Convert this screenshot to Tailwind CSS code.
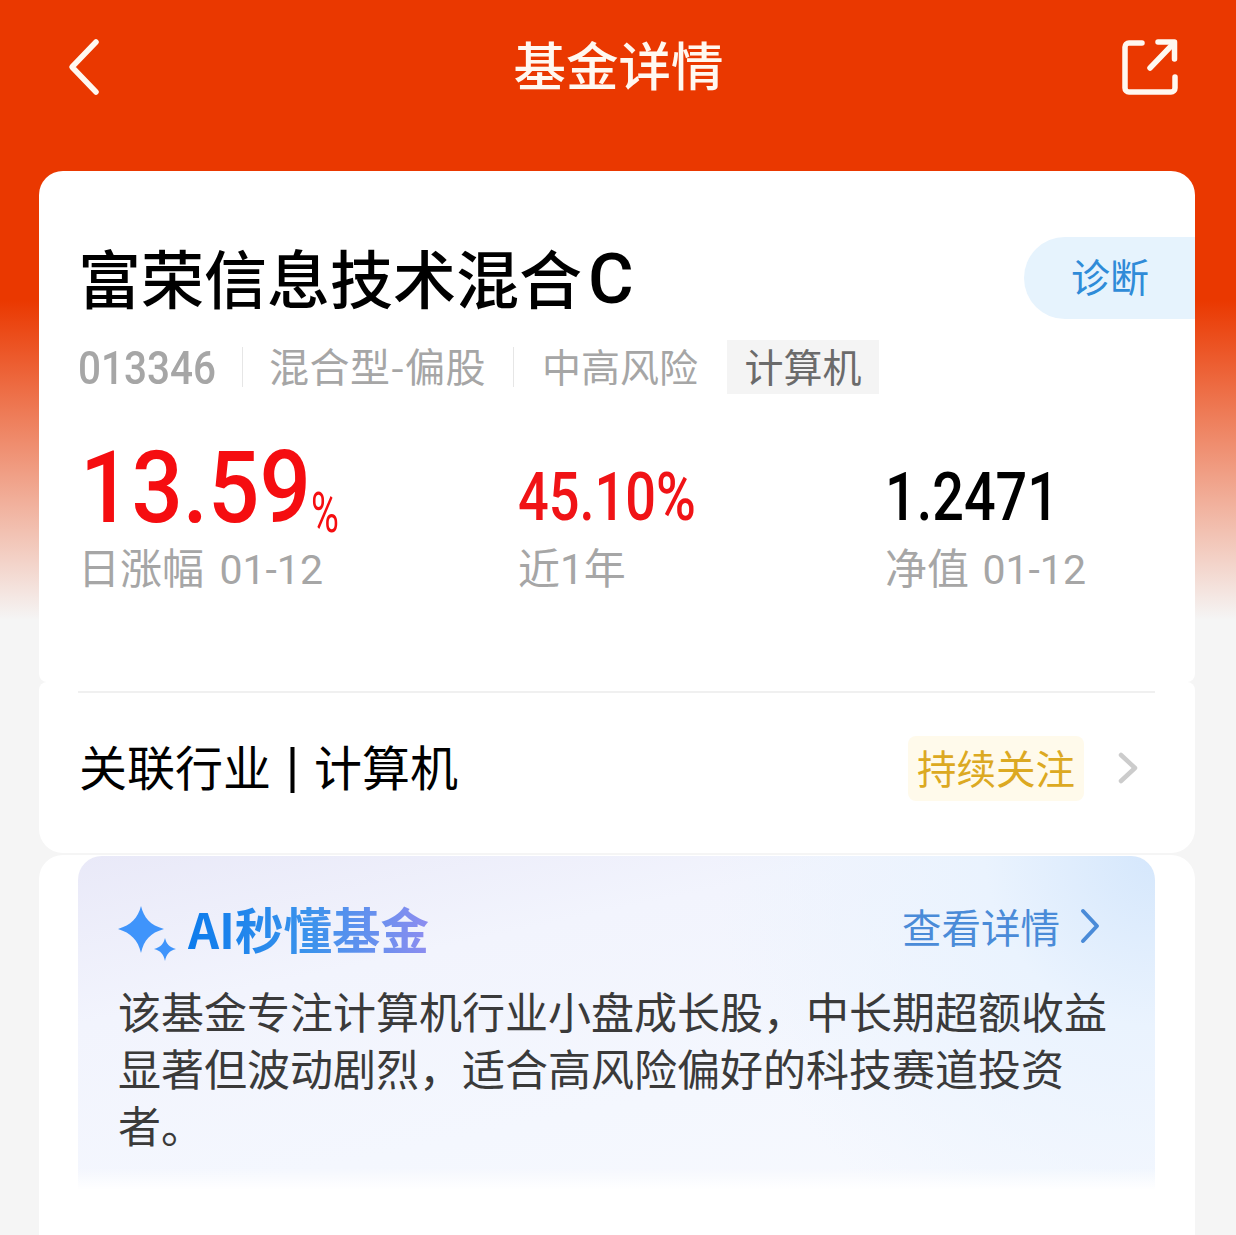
<!DOCTYPE html>
<html lang="zh-CN">
<head>
  <meta charset="UTF-8" />
  <meta name="viewport" content="width=device-width, initial-scale=1.0"/>
  <title>基金详情</title>
  <script src="https://cdn.jsdelivr.net/npm/@tailwindcss/browser@4"></script>
</head>
<body class="bg-[#f5f5f5]">
  <div class="h-[1235px] overflow-hidden bg-[linear-gradient(180deg,#ea3800_0px,#ea3800_300px,#f5f5f5_620px)] font-['Liberation_Sans','Noto_Sans_CJK_SC',sans-serif]">
    <!-- Header -->
    <div class="h-[171px] pt-[36px] px-[58px] flex items-start justify-between text-[#fff8f0]">
      <svg class="w-[52px] h-[60px]" viewBox="0 0 52 60" fill="none" stroke="currentColor" stroke-width="5.5" stroke-linecap="round" stroke-linejoin="round"><path d="M38 6 14 31l24 25"/></svg>
      <h1 class="ml-[13px] -mt-[3px] text-[52.500px] leading-[60px] font-medium font-['Noto_Sans_CJK_SC',sans-serif]">基金详情</h1>
      <svg class="w-[64px] h-[60px]" viewBox="0 0 64 60" fill="none" stroke="currentColor" stroke-width="5.5" stroke-linecap="round" stroke-linejoin="round"><path d="M28 7H15a4 4 0 0 0-4 4v41a4 4 0 0 0 4 4h42a4 4 0 0 0 4-4V41"/><path d="M36 32 60 7"/><path d="M44 6h16.500v17"/></svg>
    </div>

    <div class="ml-[39px] mr-[41px]">
      <!-- Fund summary card -->
      <div class="relative h-[511px] bg-white rounded-t-[24px] rounded-b-[8px] pt-[65px]">
        <div class="absolute right-0 top-[66px] w-[171px] h-[82px] rounded-l-[41px] bg-[#e6f3fd] pl-[47px] pb-[5px] flex items-center text-[39px] text-[#2f8bd8] font-['Noto_Sans_CJK_SC',sans-serif]">诊断</div>
        <h2 class="pl-[39px] text-[63px] leading-[80px] font-medium text-black whitespace-nowrap font-['Noto_Sans_CJK_SC',sans-serif]">富荣信息技术混合<span class="ml-[6px] text-[70px] font-['Roboto']">C</span></h2>
        <div class="mt-[21px] pl-[39px] flex items-center h-[54px] text-[#a6a6a6] font-['Noto_Sans_CJK_SC',sans-serif]">
          <span class="mt-[2px] font-['Roboto'] font-medium text-[46px] w-[136px] origin-left scale-x-[.88]">013346</span>
          <span class="ml-[28px] w-px h-[40px] bg-[#e6e6e6]"></span>
          <span class="ml-[26px] mb-[4px] text-[40px] tracking-[.5px] w-[216px] whitespace-nowrap">混合型-偏股</span>
          <span class="ml-[28px] w-px h-[40px] bg-[#e6e6e6]"></span>
          <span class="ml-[28px] mb-[4px] text-[39px] w-[157px]">中高风险</span>
          <span class="ml-[28px] w-[152px] h-[54px] pb-[4px] bg-[#f4f4f4] text-[#6b6b6b] text-[39px] flex items-center justify-center">计算机</span>
        </div>
        <div class="mt-[46px] pl-[39px] grid grid-cols-[440px_368px_1fr]">
          <div>
            <div class="h-[96px] flex items-end text-[#f50d10] font-['Roboto'] font-medium">
              <span class="ml-[2px] w-[231px] text-[100px] leading-[96px] origin-left scale-x-[.905]">13.59</span><span class="text-[56px] leading-[56px] -mb-[5px] origin-left scale-x-[.68] font-normal">%</span>
            </div>
            <div class="mt-[8px] text-[42px] leading-[44px] whitespace-nowrap text-[#a6a6a6] font-['Noto_Sans_CJK_SC',sans-serif]">日涨幅 <span class="ml-[6px] text-[41px] font-['Roboto']">01-12</span></div>
          </div>
          <div>
            <div class="h-[96px] flex items-end text-[66px] leading-[76px] text-[#f01316] font-['Roboto'] font-medium origin-left scale-x-[.82]">45.10%</div>
            <div class="mt-[8px] text-[42px] leading-[44px] text-[#a6a6a6] font-['Noto_Sans_CJK_SC',sans-serif]">近<span class="font-['Roboto']">1</span>年</div>
          </div>
          <div class="-ml-[1px]">
            <div class="h-[96px] flex items-end text-[66px] leading-[76px] text-black font-['Roboto'] font-medium origin-left scale-x-[.845]">1.2471</div>
            <div class="mt-[8px] text-[42px] leading-[44px] whitespace-nowrap text-[#a6a6a6] font-['Noto_Sans_CJK_SC',sans-serif]">净值 <span class="ml-[4px] text-[41px] font-['Roboto']">01-12</span></div>
          </div>
        </div>
      </div>

      <!-- Related industry row -->
      <div class="h-[171px] bg-white rounded-t-[8px] rounded-b-[24px] pl-[39px] pr-[40px] pt-[10px]">
        <div class="h-[161px] border-t-2 border-[#f0f0f0] -mt-[1px] pb-[9px] flex items-center">
          <div class="flex-1 pl-[1px] mb-[6px] text-[48px] text-black whitespace-nowrap font-['Noto_Sans_CJK_SC',sans-serif]">关联行业<span class="mx-[15px] font-['Liberation_Sans'] text-[50px] leading-none align-[3px]">|</span>计算机</div>
          <div class="w-[176px] h-[65px] pb-[3px] rounded-[8px] bg-[#fffaeb] text-[#dca922] text-[39.500px] flex items-center justify-center font-['Noto_Sans_CJK_SC',sans-serif]">持续关注</div>
          <svg class="ml-[31px] mr-[14px] w-[26px] h-[36px]" viewBox="0 0 26 36" fill="none" stroke="#cccccc" stroke-width="4.500" stroke-linecap="round" stroke-linejoin="round"><path d="M6 5l14 13L6 31"/></svg>
        </div>
      </div>

      <!-- AI summary card -->
      <div class="mt-[2px] h-[400px] bg-white rounded-t-[24px] pl-[39px] pr-[40px] pt-[1px]">
        <div class="h-[334px] rounded-t-[24px] px-[40px] pt-[46px] bg-[linear-gradient(180deg,transparent_312px,#ffffff_334px),radial-gradient(circle_at_100%_0%,#d5e7fc_0px,#eaf3fe_170px,transparent_440px),linear-gradient(168deg,#e9e9f8_0%,#f2f4fd_30%,#f4f7fe_65%,#f7f9fe_100%)]">
          <div class="flex items-center h-[60px]">
            <svg class="w-[60px] h-[60px]" viewBox="0 0 60 60" fill="#3f94fb"><path d="M23 4c3 12 9 19 23 23-14 4-20 11-23 24C20 38 13 31 0 27 13 23 20 16 23 4z"/><path d="M47 36c1.500 6 4 9 11 11-7 2-9.500 5-11 12-1.500-7-4-10-11-12 7-2 9.500-5 11-11z"/></svg>
            <div class="ml-[10px] mb-[8px] text-[48.500px] leading-[60px] font-bold bg-[linear-gradient(90deg,#0c7bec_0%,#3b93ec_50%,#8d8df0_100%)] bg-clip-text text-transparent font-['Noto_Sans_CJK_SC',sans-serif]">AI秒懂基金</div>
            <div class="ml-auto mr-[15px] mb-[12px] flex items-center text-[39.500px] text-[#4a8bd8] font-['Noto_Sans_CJK_SC',sans-serif]">
              查看详情
              <svg class="ml-[20px] w-[20px] h-[36px]" viewBox="0 0 20 36" fill="none" stroke="#4a8bd8" stroke-width="4" stroke-linecap="round" stroke-linejoin="round"><path d="M3 3l14 15L3 33"/></svg>
            </div>
          </div>
          <p class="mt-[20px] text-[43px] leading-[57px] text-[#3a3a3a] font-['Noto_Sans_CJK_SC',sans-serif]">该基金专注计算机行业小盘成长股，中长期超额收益显著但波动剧烈，适合高风险偏好的科技赛道投资者。</p>
        </div>
      </div>
    </div>
  </div>
</body>
</html>
